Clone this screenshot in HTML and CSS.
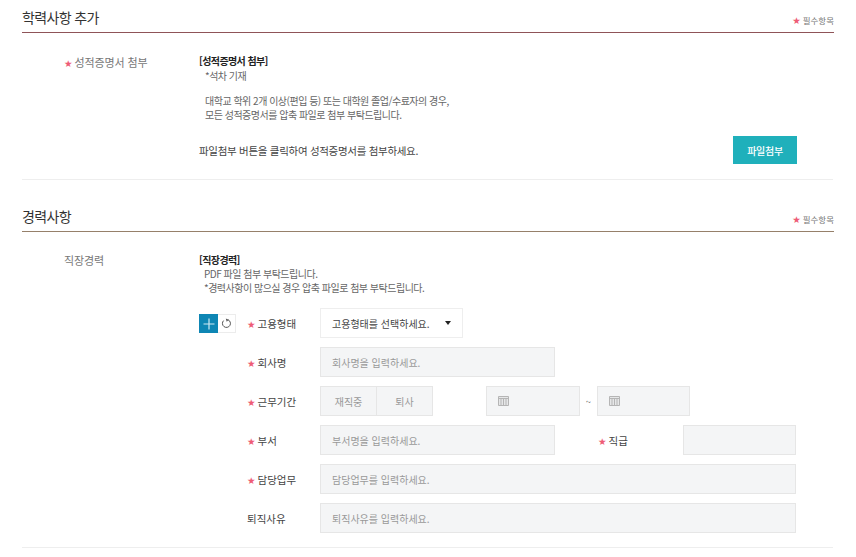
FILE: index.html
```html
<!DOCTYPE html>
<html lang="ko">
<head>
<meta charset="utf-8">
<title>학력사항 추가</title>
<link rel="stylesheet" href="styles.css">
</head>
<body>
<section class="section sec-edu">
  <header class="sec-head line-red">
    <h2>학력사항 추가</h2>
    <span class="req"><i class="star">★</i>필수항목</span>
  </header>
  <div class="sec-body edu-body">
    <div class="side-label"><i class="star">★</i>성적증명서 첨부</div>
    <div class="side-content">
      <strong class="note-title">[성적증명서 첨부]</strong>
      <p class="note note-in">*석차 기재</p>
      <p class="note note-in note-gap">대학교 학위 2개 이상(편입 등) 또는 대학원 졸업/수료자의 경우,<br>모든 성적증명서를 압축 파일로 첨부 부탁드립니다.</p>
      <div class="attach">
        <span class="attach-text">파일첨부 버튼을 클릭하여 성적증명서를 첨부하세요.</span>
        <button class="btn-file" type="button">파일첨부</button>
      </div>
    </div>
  </div>
</section>
<section class="section sec-career">
  <header class="sec-head line-brown">
    <h2>경력사항</h2>
    <span class="req"><i class="star">★</i>필수항목</span>
  </header>
  <div class="sec-body career-body">
    <div class="side-label plain">직장경력</div>
    <div class="side-content">
      <strong class="note-title title-tall">[직장경력]</strong>
      <p class="note note-in2">PDF 파일 첨부 부탁드립니다.<br>*경력사항이 많으실 경우 압축 파일로 첨부 부탁드립니다.</p>
      <div class="career-form">
        <div class="tools">
          <button class="tool tool-add" type="button" aria-label="추가"><svg width="12" height="12" viewBox="0 0 12 12"><path d="M6 .5v11M.5 6h11" stroke="#cfe9f3" stroke-width="1.2" fill="none"/></svg></button>
          <button class="tool tool-reset" type="button" aria-label="초기화"><svg width="11" height="11" viewBox="0 0 11 11"><path d="M6.9 1.7A4 4 0 1 1 2.6 2.6" stroke="#555" stroke-width="1" fill="none"/><path d="M4.8.5l2.9 1.2-2 2z" fill="#555"/></svg></button>
        </div>
        <div class="rows">
          <div class="row">
            <label class="f-label"><i class="star">★</i>고용형태</label>
            <div class="select"><span>고용형태를 선택하세요.</span><i class="caret"></i></div>
          </div>
          <div class="row">
            <label class="f-label"><i class="star">★</i>회사명</label>
            <div class="input w-235">회사명을 입력하세요.</div>
          </div>
          <div class="row">
            <label class="f-label"><i class="star">★</i>근무기간</label>
            <div class="seg"><span>재직중</span><span>퇴사</span></div>
            <div class="date date-from"><svg class="cal" width="11" height="10" viewBox="0 0 11 10"><path d="M.5.5h10v9H.5zM.5 2.5h10M3 2.5v7M5.5 2.5v7M8 2.5v7" stroke="#b5b5b5" fill="#e6e7e8"/></svg></div>
            <span class="tilde">~</span>
            <div class="date date-to"><svg class="cal" width="11" height="10" viewBox="0 0 11 10"><path d="M.5.5h10v9H.5zM.5 2.5h10M3 2.5v7M5.5 2.5v7M8 2.5v7" stroke="#b5b5b5" fill="#e6e7e8"/></svg></div>
          </div>
          <div class="row">
            <label class="f-label"><i class="star">★</i>부서</label>
            <div class="input w-235">부서명을 입력하세요.</div>
            <label class="f-label f-rank"><i class="star">★</i>직급</label>
            <div class="input w-113"></div>
          </div>
          <div class="row">
            <label class="f-label"><i class="star">★</i>담당업무</label>
            <div class="input w-476">담당업무를 입력하세요.</div>
          </div>
          <div class="row">
            <label class="f-label">퇴직사유</label>
            <div class="input w-476">퇴직사유를 입력하세요.</div>
          </div>
        </div>
      </div>
    </div>
  </div>
</section>
</body>
</html>
```
FILE: styles.css
```css
* { box-sizing: border-box; }
html, body { margin: 0; padding: 0; }
body {
  width: 856px;
  height: 557px;
  overflow: hidden;
  background: #fff;
  color: #333;
  font-family: "Noto Sans CJK KR", "Noto Sans", sans-serif;
  font-size: 10px;
  padding: 0 22px;
}
.section { width: 812px; }
.sec-head {
  height: 33px;
  display: flex;
  justify-content: space-between;
  align-items: flex-start;
}
.line-red { border-bottom: 1px solid #8f5458; }
.line-brown { border-bottom: 1px solid #96806a; }
.sec-head h2 {
  margin: 0;
  font-size: 14px;
  line-height: 20px;
  font-weight: 400;
  letter-spacing: -0.65px;
  color: #333;
  padding-top: 7px;
}
.req { font-size: 8.5px; line-height: 12px; color: #777; padding-top: 14px; }
.star {
  font-style: normal;
  color: #ee5c76;
  font-size: 9.5px;
  margin-right: 2px;
  font-family: "DejaVu Sans", sans-serif;
}
.sec-body {
  display: grid;
  grid-template-columns: 177px 1fr;
  border-bottom: 1px solid #eee;
  width: 811px;
}
.edu-body { height: 147px; padding-top: 21px; }
.career-body { height: 316px; padding-top: 20px; }
.sec-career { padding-top: 19px; }
.side-label { padding-left: 42px; font-size: 11px; line-height: 16px; color: #777; letter-spacing: -0.1px; }
.note-title { display: block; font-size: 10px; line-height: 14px; font-weight: 700; color: #222; letter-spacing: -0.6px; }
.title-tall { line-height: 15px; }
.note { margin: 0; font-size: 10px; line-height: 14px; color: #666; letter-spacing: -0.5px; }
.note-in { padding-left: 6px; margin-top: 1px; }
.note-gap { margin-top: 11px; line-height: 13.5px; }
.note-in2 { padding-left: 5px; }
.attach {
  display: flex;
  justify-content: space-between;
  align-items: center;
  width: 598px;
  margin-top: 15px;
  height: 28px;
}
.attach-text { font-size: 10.5px; color: #444; letter-spacing: -0.3px; }
.btn-file {
  width: 64px;
  height: 28px;
  border: 0;
  padding: 0;
  background: #1fb0bb;
  color: #fff;
  font: 500 10px "Noto Sans CJK KR", sans-serif;
  letter-spacing: -0.3px;
}
.career-form { display: flex; margin-top: 13px; }
.tools { display: flex; width: 48px; flex: none; padding-top: 6px; align-items: flex-start; }
.tool { height: 19px; padding: 0; border: 0; display: flex; align-items: center; justify-content: center; }
.tool-add { width: 19px; background: #0e86b4; }
.tool-reset { width: 18px; background: #fff; border: 1px solid #ececec; border-left: 0; }
.rows { display: flex; flex-direction: column; gap: 9px; }
.row { display: flex; align-items: center; height: 30px; }
.f-label { width: 73px; flex: none; font-size: 10.5px; color: #444; }
.f-rank { width: 85px; margin-left: 43px; }
.select {
  width: 143px;
  height: 30px;
  border: 1px solid #eee;
  background: #fff;
  display: flex;
  align-items: center;
  justify-content: space-between;
  padding: 0 11px;
  color: #444;
}
.caret { width: 0; height: 0; border: 3px solid transparent; border-top: 4px solid #222; border-bottom: 0; }
.input {
  height: 30px;
  border: 1px solid #e6e6e6;
  background: #f4f5f6;
  color: #999;
  display: flex;
  align-items: center;
  padding-left: 11px;
}
.w-235 { width: 235px; }
.w-113 { width: 113px; }
.w-476 { width: 476px; }
.seg { display: flex; width: 113px; height: 30px; }
.seg span {
  flex: 1;
  background: #f4f5f6;
  border: 1px solid #e6e6e6;
  color: #999;
  display: flex;
  align-items: center;
  justify-content: center;
}
.seg span + span { border-left: 0; }
.date {
  height: 30px;
  border: 1px solid #e6e6e6;
  background: #f4f5f6;
  display: flex;
  align-items: center;
  padding-left: 11px;
}
.date-from { width: 94px; margin-left: 53px; }
.date-to { width: 93px; }
.tilde { width: 17px; text-align: center; color: #555; font-size: 9px; }
```
